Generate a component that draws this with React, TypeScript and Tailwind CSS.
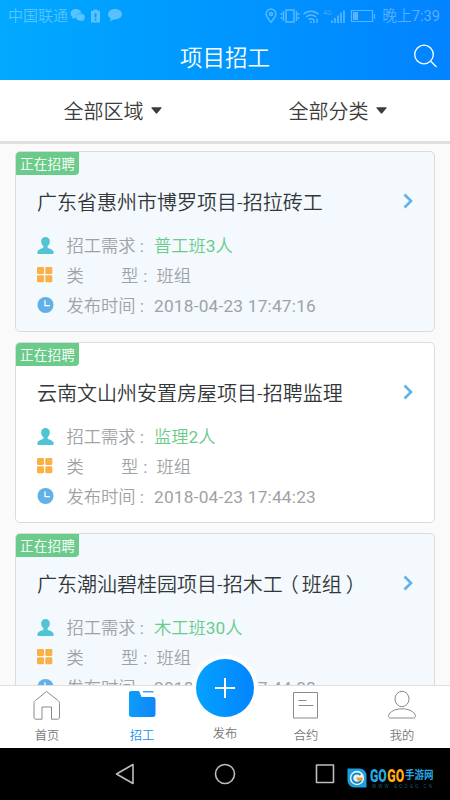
import type { ReactNode } from "react";
import clsx from "clsx";

interface Job {
  title: ReactNode;
  need: [string, string, string];
  type: string;
  time: string;
  tinted: boolean;
}

const jobs: Job[] = [
  { title: "广东省惠州市博罗项目-招拉砖工", need: ["普工班", "3", "人"], type: "班组", time: "2018-04-23 17:47:16", tinted: true },
  { title: "云南文山州安置房屋项目-招聘监理", need: ["监理", "2", "人"], type: "班组", time: "2018-04-23 17:44:23", tinted: false },
  {
    title: (
      <>
        广东潮汕碧桂园项目-招木工<span className="-ml-[4px] mr-[3px]">（</span>班组<span className="ml-[4px]">）</span>
      </>
    ),
    need: ["木工班", "30", "人"],
    type: "班组",
    time: "2018-04-23 17:44:08",
    tinted: true,
  },
];

function StatusBar() {
  return (
    <div className="flex h-[32px] items-center justify-between pl-2 pr-[10px] text-[15px] leading-none text-white/35">
      <div className="flex items-center">
        <span>中国联通</span>
        <svg className="ml-[2px]" width="56" height="16" viewBox="0 0 56 16" fill="currentColor">
          <path d="M6 1C2.900 1 .5 3 .5 5.600c0 1.400.8 2.700 2 3.500L2 11l2-1.100c.6.200 1.300.3 2 .3C5.600 7 8 4.700 11.400 4.700 10.900 2.500 8.700 1 6 1Z" />
          <path d="M10.500 5.600c-2.500 0-4.400 1.600-4.400 3.600s1.900 3.600 4.400 3.600c.6 0 1.100-.1 1.600-.2l1.600.9-.4-1.500c1-.7 1.600-1.700 1.600-2.800 0-2-1.900-3.600-4.400-3.600Z" />
          <path fillRule="evenodd" d="M23.500 1.500h4v1.300H30v11.700h-9V2.800h2.500V1.500Zm1 4v4h2v-4h-2Zm0 5.200v1.800h2v-1.800h-2Z" />
          <path d="M45 1c-4 0-7 2.300-7 5.300 0 1.900 1.200 3.400 2.900 4.300-.1 1-.7 1.800-1.400 2.400 1.700 0 3.200-.6 4.300-1.500 4.500.2 8.200-2 8.200-5.200C52 3.300 49 1 45 1Z" />
        </svg>
      </div>
      <div className="flex items-center">
        <svg className="mr-[4px]" width="114" height="18" viewBox="0 0 114 18" fill="none" stroke="currentColor" strokeWidth="1.500">
          <path d="M7 15.200C4.500 12 2.100 9.700 2.100 7a4.900 4.900 0 0 1 9.800 0c0 2.700-2.400 5-4.900 8.200Z" />
          <circle cx="7" cy="7" r="1.500" />
          <path d="M22 3h8v12h-8zM19.500 4v10M32.500 4v10M17.500 6v2m0 2v2M34.500 6v2m0 2v2" />
          <path d="M39.500 7.200a11 11 0 0 1 15 0M42 10a7.500 7.500 0 0 1 10 0M44.500 12.700a4 4 0 0 1 5 0" />
          <path d="M46 15h2M50 12.500V16M53 11.500V16" />
          <path d="M68 16v-2.500M71 16v-5M74 16V8.500M77 16V5.500M80 16V3.500" strokeWidth="1.700" />
          <path d="M87.500 3.500h21v11h-21zM110.500 7v5" strokeWidth="1.200" />
          <path d="M89 5h5v8h-5z" fill="currentColor" stroke="none" />
          <text x="59" y="8" fontSize="7" fill="currentColor" stroke="none">4G</text>
        </svg>
        <span className="pt-[1px] text-[14.700px]">
          晚上<span className="font-normal">7:39</span>
        </span>
      </div>
    </div>
  );
}

function PersonIcon() {
  return (
    <svg width="18" height="18" viewBox="0 0 18 18" fill="#50c4d4">
      <path d="M8.500 0C5.900 0 4.200 1.800 4.200 4.400c0 2 .9 3.800 2.200 4.700v1.300c-.5 1-4.500 1.400-5.700 3.700-.5 1-.5 2.600.3 3h15c.8-.4.800-2 .3-3-1.200-2.300-5.200-2.700-5.700-3.700V9.100c1.300-.9 2.200-2.700 2.200-4.700C12.800 1.800 11.100 0 8.500 0Z" />
    </svg>
  );
}

function GridIcon() {
  return (
    <svg width="18" height="18" viewBox="0 0 18 18" fill="#fbb044">
      <rect x="0" y="0" width="7" height="7" rx="1.200" />
      <rect x="8.300" y="0" width="7" height="7" rx="1.200" />
      <rect x="0" y="8.300" width="7" height="7" rx="1.200" />
      <rect x="8.300" y="8.300" width="7" height="7" rx="1.200" />
    </svg>
  );
}

function ClockIcon() {
  return (
    <svg width="18" height="18" viewBox="0 0 18 18">
      <circle cx="8.500" cy="8" r="8" fill="#62afe9" />
      <path d="M8 3.300v5.400h5" fill="none" stroke="#fff" strokeWidth="1.300" />
    </svg>
  );
}

function Row({ icon, label, children }: { icon: ReactNode; label: ReactNode; children: ReactNode }) {
  return (
    <div className="flex h-[30px] items-center text-[17.300px] leading-none text-[#a0a3a5]">
      <span className="w-[29.500px] shrink-0">{icon}</span>
      <div className="flex items-center pt-px">
        {label}
        {children}
      </div>
    </div>
  );
}

function JobCard({ job }: { job: Job }) {
  const [team, count, unit] = job.need;

  return (
    <article
      className={clsx(
        "h-[181px] shrink-0 rounded-[5px] border-[1.500px] border-[#d9dcdd]",
        job.tinted ? "bg-[#f3f9fd]" : "bg-white"
      )}
    >
      <div className="flex h-[23px] w-[63px] items-center justify-center rounded-tl-[4px] rounded-br-[4px] bg-[#6bcb8a] pt-[2px] text-[13.700px] leading-none text-white">
        正在招聘
      </div>
      <div className="mt-[10px] flex h-[32px] items-center justify-between pl-[21px] pr-[21px]">
        <h2 className="whitespace-nowrap pt-[4px] text-[20px] leading-none text-[#34373a]">{job.title}</h2>
        <svg width="10" height="16" viewBox="0 0 10 16" fill="none" stroke="#62b1e8" strokeWidth="2.600">
          <path d="M1.500 1.500 8 8l-6.500 6.500" />
        </svg>
      </div>
      <div className="mt-[14px] pl-[21px]">
        <Row icon={<PersonIcon />} label={<span className="w-[87.500px]">招工需求<span className="pl-[4px] font-normal">:</span></span>}>
          <span className="text-[#6bcb8a]">
            {team}
            <span className="font-normal">{count}</span>
            {unit}
          </span>
        </Row>
        <Row
          icon={<GridIcon />}
          label={
            <span className="flex w-[90px]">
              <span className="w-[54.500px]">类</span>型<span className="pl-[5px] font-normal">:</span>
            </span>
          }
        >
          <span>{job.type}</span>
        </Row>
        <Row icon={<ClockIcon />} label={<span className="w-[87.500px]">发布时间<span className="pl-[4px] font-normal">:</span></span>}>
          <span className="font-normal tracking-[0.200px]">{job.time}</span>
        </Row>
      </div>
    </article>
  );
}

function Filter({ label }: { label: string }) {
  return (
    <button className="flex flex-1 items-center justify-center gap-[7px] text-[20px] leading-none text-[#3c3c3c]">
      <span className="pt-[3px]">{label}</span>
      <svg width="11" height="7" viewBox="0 0 11 7" fill="#3c3c3c">
        <path d="M1 .3h9c.6 0 .8.500.4 1L6.200 6.200a1 1 0 0 1-1.400 0L.6 1.300C.2.800.4.300 1 .3Z" />
      </svg>
    </button>
  );
}

function Tab({ label, active, children }: { label: string; active?: boolean; children: ReactNode }) {
  return (
    <div className={clsx("flex w-[60px] flex-col items-center", active ? "text-[#1790ec]" : "text-[#777]")}>
      <div className="mt-[4px] h-[32px]">{children}</div>
      <span className="mt-[8px] text-[12.300px] leading-[13px]">{label}</span>
    </div>
  );
}

function TabBar() {
  return (
    <nav className="relative h-[63px] shrink-0 border-t border-[#dedede] bg-white">
      <div className="flex pl-[17px] pr-[18px]">
        <Tab label="首页">
          <svg width="30" height="32" viewBox="0 0 30 32" fill="none" stroke="#8a8a8a">
            <path d="M14.500 1.500 3.800 10.200C2.500 11.300 2 12 2 13.500V27c0 1.500.8 2.200 2 2.200h6V17h9.500v12.200h6c1.300 0 2-.7 2-2.200V13.500c0-1.500-.5-2.200-1.800-3.300Z" />
          </svg>
        </Tab>
        <div className="ml-[35px]">
          <Tab label="招工" active>
            <svg width="30" height="32" viewBox="0 0 30 32">
              <defs>
                <linearGradient id="folder" x1="0" x2="1">
                  <stop stopColor="#0d9dfc" />
                  <stop offset="1" stopColor="#0f86f7" />
                </linearGradient>
              </defs>
              <path d="M4 1h8l2.500 6H26c1.500 0 2.500 1 2.500 2.500v15c0 1.500-1 2.500-2.500 2.500H4.500C3 27 2 26 2 24.500V3c0-1.300.7-2 2-2Z" fill="url(#folder)" />
              <path d="M16 1.800h10.500" stroke="#128cf5" strokeWidth="1.200" />
            </svg>
          </Tab>
        </div>
        <div className="ml-[104px]">
          <Tab label="合约">
            <svg width="30" height="32" viewBox="0 0 30 32" fill="none" stroke="#8a8a8a">
              <path d="M2.500 2.500h24v25.500h-24zM7.500 10.500h8M7.500 15.500h15" />
            </svg>
          </Tab>
        </div>
        <div className="ml-[36px]">
          <Tab label="我的">
            <svg width="30" height="32" viewBox="0 0 30 32" fill="none" stroke="#8a8a8a">
              <ellipse cx="15" cy="9" rx="7" ry="7.700" />
              <path d="M15 18.800c-7.200 0-12.500 3.200-13.300 6.500-.3 1.600.2 2.700 1.900 2.700h22.800c1.700 0 2.200-1.100 1.900-2.700-.8-3.300-6.100-6.500-13.300-6.500Z" />
            </svg>
          </Tab>
        </div>
      </div>
      <div className="absolute -top-[31px] left-[192px] flex w-[66px] flex-col items-center">
        <div className="flex size-[66px] items-center justify-center rounded-full bg-white">
          <div className="flex size-[58px] items-center justify-center rounded-full bg-gradient-to-r from-[#05a1ff] to-[#0584ff]">
            <svg width="22" height="22" viewBox="0 0 22 22" stroke="#fff" strokeWidth="2">
              <path d="M11 1v20M1 11h20" />
            </svg>
          </div>
        </div>
        <span className="mt-[7px] text-[12.300px] leading-[13px] text-[#777]">发布</span>
      </div>
    </nav>
  );
}

function SystemNav() {
  return (
    <div className="flex h-[52px] shrink-0 items-center bg-black pl-[115px]">
      <svg width="220" height="24" viewBox="0 0 220 24" fill="none" stroke="#bdbdbd" strokeWidth="1.600" strokeLinejoin="round">
        <path d="M18 2.500v19L1.500 12Z" />
        <circle cx="110" cy="12" r="9.500" />
        <path d="M201.500 3h17v17.500h-17z" />
      </svg>
      <div className="ml-[12px] mt-[8px] flex items-center gap-[3px]">
        <svg width="20" height="20" viewBox="0 0 20 20">
          <path d="M.5.500h12a7 7 0 0 1 7 7v12h-12a7 7 0 0 1-7-7Z" fill="#1b9edb" />
          <circle cx="10" cy="10" r="7.200" fill="#e4f6fd" />
          <path d="M13.500 7A4.700 4.700 0 1 0 14 12.500" fill="none" stroke="#1686c5" strokeWidth="2" />
          <path d="M9 9.500h7l-1 4-2-1.500-2 1Z" fill="#f49b20" />
        </svg>
        <svg width="64" height="24" viewBox="0 0 64 24">
          <text x="0" y="15.500" fontSize="18" fontWeight="900" textLength="16.800" lengthAdjust="spacingAndGlyphs" fill="#28a9e2">GO</text>
          <text x="17.300" y="15.500" fontSize="18" fontWeight="900" textLength="16.800" lengthAdjust="spacingAndGlyphs" fill="#ffac16">GO</text>
          <text x="35" y="13" fontSize="11" fontWeight="700" textLength="28.500" lengthAdjust="spacingAndGlyphs" fill="#28a9e2">手游网</text>
          <text x="2" y="21.500" fontSize="4.500" textLength="60" fill="#2383b0">WWW.GOOGO.CN</text>
        </svg>
      </div>
    </div>
  );
}

export default function App() {
  return (
    <div className="flex h-[800px] w-[450px] flex-col overflow-hidden bg-[#fafafa] font-['Roboto','Noto_Sans_CJK_SC',sans-serif] font-[350]">
      <header className="h-[80px] shrink-0 bg-gradient-to-r from-[#03a9ff] to-[#0383ff]">
        <StatusBar />
        <div className="grid h-[48px] grid-cols-[1fr_auto_1fr] items-center">
          <h1 className="col-start-2 pt-[4px] text-[22.500px] leading-none text-white">项目招工</h1>
          <svg className="mr-[12px] justify-self-end" width="25" height="26" viewBox="0 0 25 26" fill="none" stroke="#fff" strokeWidth="1.300">
            <circle cx="11" cy="11.500" r="9.300" />
            <path d="m18 18.500 5.500 5.500" />
          </svg>
        </div>
      </header>
      <div className="flex h-[64px] shrink-0 border-b-[3px] border-[#dfdfdf] bg-white">
        <Filter label="全部区域" />
        <Filter label="全部分类" />
      </div>
      <main className="flex min-h-0 flex-1 flex-col gap-[10px] overflow-hidden px-[15px] pt-[7px]">
        {jobs.map((job) => (
          <JobCard key={job.time} job={job} />
        ))}
      </main>
      <TabBar />
      <SystemNav />
    </div>
  );
}
